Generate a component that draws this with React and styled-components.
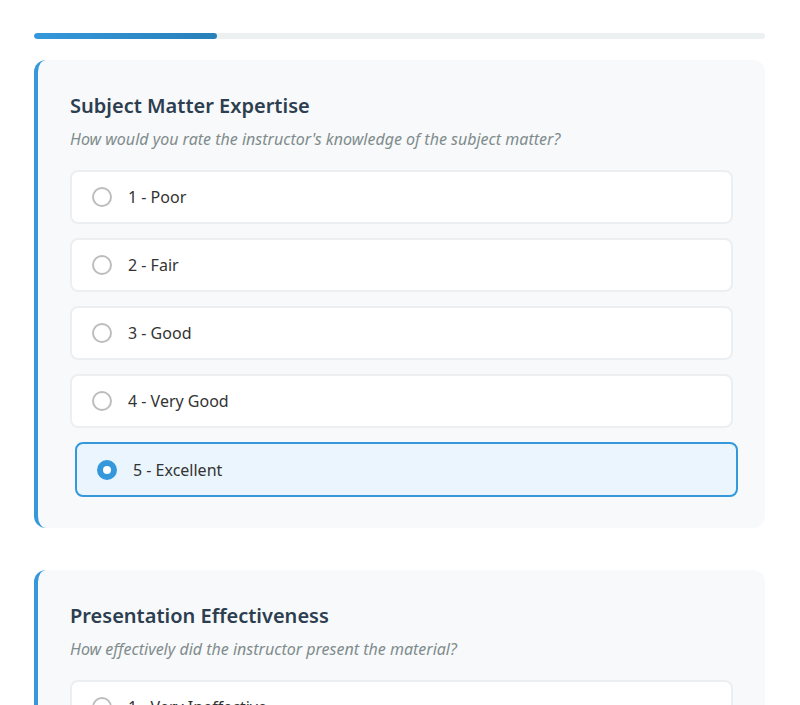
import React, { useState } from "react";
import styled, { createGlobalStyle } from "styled-components";

const Global = createGlobalStyle`
  * { box-sizing: border-box; }
  body {
    margin: 0;
    background: #ffffff;
    font-family: "Noto Sans", "Open Sans", sans-serif;
    color: #333;
  }
`;

const Page = styled.div`
  width: 731px;
  margin: 0 35px 0 34px;
  padding-top: 33px;
  display: flex;
  flex-direction: column;
`;

const Track = styled.div`
  height: 6px;
  border-radius: 3px;
  background: #ecf0f1;
  margin-bottom: 21px;
  overflow: hidden;
`;

const Fill = styled.div`
  height: 100%;
  border-radius: 3px;
  background: linear-gradient(90deg, #3498db, #2980b9);
`;

const Card = styled.section`
  background: #f8f9fa;
  border-left: 4px solid #3498db;
  border-radius: 12px;
  padding: 30px 32px 31px 32px;
  margin-bottom: 42px;
`;

const Title = styled.h2`
  margin: 0 0 6px 0;
  font-size: 20px;
  font-weight: 600;
  color: #2c3e50;
  line-height: 32px;
`;

const Sub = styled.p`
  margin: 0 0 20px 0;
  font-size: 16px;
  font-style: italic;
  color: #7f8c8d;
  line-height: 22px;
`;

const Options = styled.div`
  display: flex;
  flex-direction: column;
  gap: 14px;
`;

const Option = styled.label`
  display: flex;
  align-items: center;
  gap: 16px;
  height: ${(p) => (p.$sel ? "55px" : "54px")};
  padding: 0 20px;
  background: ${(p) => (p.$sel ? "#ebf5fe" : "#ffffff")};
  border: 2px solid ${(p) => (p.$sel ? "#3498db" : "#eceff1")};
  border-radius: 8px;
  transform: ${(p) => (p.$sel ? "translateX(5px)" : "none")};
  cursor: pointer;
  font-size: 16px;
  color: #333;
`;

const Radio = styled.span`
  width: 20px;
  height: 20px;
  border-radius: 50%;
  flex: none;
  border: ${(p) => (p.$sel ? "6px solid #3498db" : "2px solid #bdbdbd")};
  background: #fff;
`;

const questions = [
  {
    title: "Subject Matter Expertise",
    sub: "How would you rate the instructor's knowledge of the subject matter?",
    opts: ["1 - Poor", "2 - Fair", "3 - Good", "4 - Very Good", "5 - Excellent"],
    sel: 4,
  },
  {
    title: "Presentation Effectiveness",
    sub: "How effectively did the instructor present the material?",
    opts: [
      "1 - Very Ineffective",
      "2 - Ineffective",
      "3 - Neutral",
      "4 - Effective",
      "5 - Very Effective",
    ],
    sel: -1,
  },
];

export default function App() {
  const [sels, setSels] = useState(questions.map((q) => q.sel));
  return (
    <>
      <Global />
      <Page>
        <Track>
          <Fill style={{ width: "25%" }} />
        </Track>
        {questions.map((q, qi) => (
          <Card key={q.title}>
            <Title>{q.title}</Title>
            <Sub>{q.sub}</Sub>
            <Options>
              {q.opts.map((o, oi) => {
                const s = sels[qi] === oi;
                return (
                  <Option
                    key={o}
                    $sel={s}
                    onClick={() =>
                      setSels((p) => p.map((v, i) => (i === qi ? oi : v)))
                    }
                  >
                    <Radio $sel={s} />
                    {o}
                  </Option>
                );
              })}
            </Options>
          </Card>
        ))}
      </Page>
    </>
  );
}
